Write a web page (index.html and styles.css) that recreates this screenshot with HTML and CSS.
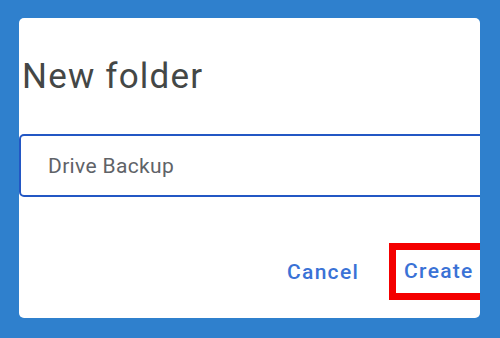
FILE: index.html
```html
<!DOCTYPE html>
<html lang="en">
<head>
<meta charset="utf-8">
<title>New folder</title>
<link rel="stylesheet" href="styles.css">
</head>
<body>
<div class="stage">
  <div class="dialog">
    <h1 class="title">New folder</h1>
    <div class="field"><span class="field-text">Drive Backup</span></div>
    <div class="actions">
      <button class="btn btn-cancel">Cancel</button>
      <button class="btn btn-create">Create</button>
    </div>
  </div>
</div>
</body>
</html>
```
FILE: styles.css
```css
html, body {
  margin: 0;
  padding: 0;
  width: 500px;
  height: 338px;
  overflow: hidden;
  background: #2f80cd;
}
.stage {
  padding: 18px 20px 20px 19px;
}
.dialog {
  width: 461px;
  height: 300px;
  background: #ffffff;
  border-radius: 5px;
  overflow: hidden;
  display: flex;
  flex-direction: column;
  font-family: Roboto, "Noto Sans", sans-serif;
}
.title {
  margin: 39px 0 0 0;
  padding-left: 3px;
  font-size: 35px;
  line-height: 40px;
  font-weight: 400;
  color: #444746;
  letter-spacing: 1.2px;
  white-space: nowrap;
}
.field {
  margin-top: 37px;
  width: 480px;
  height: 63px;
  box-sizing: border-box;
  border: 2px solid #2357c4;
  border-radius: 5px;
  display: flex;
  align-items: center;
  padding-left: 27px;
}
.field-text {
  font-size: 21px;
  color: #5f6368;
  letter-spacing: 0.35px;
  white-space: nowrap;
}
.actions {
  margin-top: 46px;
  display: flex;
  align-items: center;
  padding-left: 268px;
  gap: 30px;
}
.btn {
  font-family: Roboto, "Noto Sans", sans-serif;
  font-size: 21px;
  font-weight: 500;
  letter-spacing: 1.3px;
  color: #3a72d6;
  background: none;
  border: 0;
  padding: 0;
  margin: 0;
  line-height: 24px;
  white-space: nowrap;
  flex: none;
}
.btn-create {
  border: 7px solid #f40000;
  padding: 9px 20px 10px 8px;
}
```
